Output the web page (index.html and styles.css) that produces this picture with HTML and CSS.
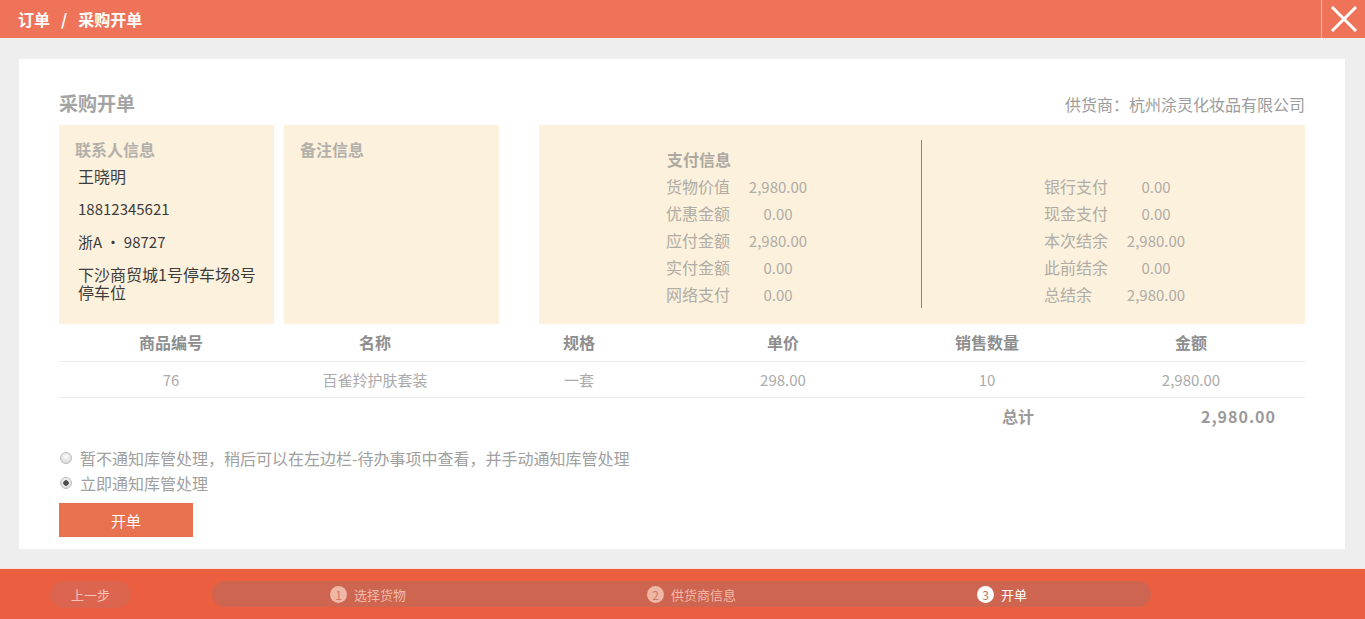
FILE: index.html
```html
<!DOCTYPE html>
<html lang="zh-CN">
<head>
<meta charset="utf-8">
<title>采购开单</title>
<link rel="stylesheet" href="styles.css">
</head>
<body>
<header class="topbar">
  <div class="crumb">订单<span class="sep">/</span>采购开单</div>
  <button class="close" aria-label="关闭">
    <svg width="28" height="28" viewBox="0 0 28 28"><path d="M2 2L26 26M26 2L2 26" stroke="#fff" stroke-width="3" fill="none"/></svg>
  </button>
</header>
<main class="page">
  <section class="panel">
    <div class="panel-head">
      <h1>采购开单</h1>
      <div class="supplier">供货商：杭州涂灵化妆品有限公司</div>
    </div>
    <div class="info">
      <div class="card contact">
        <div class="card-title">联系人信息</div>
        <div class="c-item c-name">王晓明</div>
        <div class="c-item">18812345621</div>
        <div class="c-item">浙A · 98727</div>
        <div class="c-item c-addr">下沙商贸城1号停车场8号停车位</div>
      </div>
      <div class="card note">
        <div class="card-title">备注信息</div>
      </div>
      <div class="card pay">
        <div class="pay-col">
          <div class="pay-title">支付信息</div>
          <div class="pay-row"><span class="pay-label">货物价值</span><span class="pay-val">2,980.00</span></div>
          <div class="pay-row"><span class="pay-label">优惠金额</span><span class="pay-val">0.00</span></div>
          <div class="pay-row"><span class="pay-label">应付金额</span><span class="pay-val">2,980.00</span></div>
          <div class="pay-row"><span class="pay-label">实付金额</span><span class="pay-val">0.00</span></div>
          <div class="pay-row"><span class="pay-label">网络支付</span><span class="pay-val">0.00</span></div>
        </div>
        <div class="pay-col pay-right">
          <div class="pay-row"><span class="pay-label">银行支付</span><span class="pay-val">0.00</span></div>
          <div class="pay-row"><span class="pay-label">现金支付</span><span class="pay-val">0.00</span></div>
          <div class="pay-row"><span class="pay-label">本次结余</span><span class="pay-val">2,980.00</span></div>
          <div class="pay-row"><span class="pay-label">此前结余</span><span class="pay-val">0.00</span></div>
          <div class="pay-row"><span class="pay-label">总结余</span><span class="pay-val">2,980.00</span></div>
        </div>
      </div>
    </div>
    <div class="grid grid-head">
      <div>商品编号</div><div>名称</div><div>规格</div><div>单价</div><div>销售数量</div><div>金额</div>
    </div>
    <div class="grid grid-row">
      <div>76</div><div>百雀羚护肤套装</div><div>一套</div><div>298.00</div><div>10</div><div>2,980.00</div>
    </div>
    <div class="total">
      <div class="total-label">总计</div>
      <div class="total-val">2,980.00</div>
    </div>
    <div class="opts">
      <label class="opt"><span class="radio"></span>暂不通知库管处理，稍后可以在左边栏-待办事项中查看，并手动通知库管处理</label>
      <label class="opt"><span class="radio checked"></span>立即通知库管处理</label>
    </div>
    <button class="submit">开单</button>
  </section>
</main>
<footer class="footer">
  <button class="prev">上一步</button>
  <div class="steps">
    <div class="step"><span class="num">1</span>选择货物</div>
    <div class="step"><span class="num">2</span>供货商信息</div>
    <div class="step active"><span class="num">3</span>开单</div>
  </div>
</footer>
</body>
</html>
```
FILE: styles.css
```css
html, body {
  margin: 0;
  padding: 0;
}
body {
  background: #eeeeee;
  font-family: "Noto Sans CJK SC", "Noto Sans", sans-serif;
  overflow: hidden;
}

.topbar {
  height: 38px;
  background: #ef7358;
  display: flex;
  align-items: center;
  justify-content: space-between;
  color: #fff;
}
.crumb {
  padding-left: 18px;
  font-size: 16px;
  font-weight: 700;
  line-height: 38px;
}
.sep {
  margin: 0 11px;
}
.close {
  width: 44px;
  height: 38px;
  border: 0;
  border-left: 1px solid rgba(255, 255, 255, 0.55);
  background: transparent;
  padding: 0;
  display: flex;
  align-items: center;
  justify-content: center;
}

.page {
  padding: 21px 20px 20px 19px;
}
.panel {
  background: #fff;
  height: 490px;
  box-sizing: border-box;
  padding: 32px 40px 0;
}
.panel-head {
  display: flex;
  justify-content: space-between;
  align-items: center;
  height: 24px;
}
.panel-head h1 {
  margin: 0;
  font-size: 19px;
  line-height: 24px;
  color: #a4a4a4;
  font-weight: 700;
}
.supplier {
  font-size: 16px;
  color: #9c9c9c;
  line-height: 24px;
  padding-top: 2px;
}

.info {
  display: flex;
  margin-top: 10px;
  height: 199px;
}
.card {
  background: #fcf1dc;
  box-sizing: border-box;
}
.contact, .note {
  width: 215px;
  padding: 14px 10px 0 16px;
}
.note {
  margin-left: 10px;
}
.card-title {
  font-size: 16px;
  font-weight: 700;
  line-height: 20px;
  color: #b3b0aa;
}
.c-item {
  margin: 13px 0 0 3px;
  font-size: 15px;
  line-height: 20px;
  color: #3c3c3c;
}
.c-name {
  margin-top: 7px;
  font-size: 16px;
}
.c-addr {
  font-size: 16px;
  line-height: 18px;
}

.pay {
  width: 766px;
  margin-left: 40px;
  display: flex;
  padding: 15px 0 16px;
}
.pay-col {
  width: 382px;
  box-sizing: border-box;
  padding: 6px 0 0 127px;
}
.pay-right {
  width: 384px;
  border-left: 1px solid #8e8274;
  padding: 33px 0 0 122px;
}
.pay-title {
  font-size: 16px;
  font-weight: 700;
  line-height: 27px;
  color: #ada9a2;
  margin-left: 1px;
}
.pay-row {
  display: flex;
  font-size: 16px;
  line-height: 27px;
  color: #b0aca6;
}
.pay-label {
  width: 72px;
}
.pay-val {
  width: 80px;
  text-align: center;
  font-size: 15px;
}

.grid {
  display: grid;
  grid-template-columns: repeat(6, 204px);
  padding: 0 12px 0 10px;
  border-bottom: 1px solid #ececec;
  text-align: center;
  font-size: 16px;
}
.grid-head {
  height: 37px;
  line-height: 37px;
  font-weight: 700;
  color: #8e8e8e;
}
.grid-row {
  height: 35px;
  line-height: 35px;
  color: #ababab;
  font-size: 15px;
}
.total {
  display: flex;
  justify-content: flex-end;
  padding-right: 29px;
  height: 37px;
  line-height: 37px;
  font-size: 16px;
  font-weight: 700;
  color: #9a9a9a;
}
.total-label {
  width: 100px;
  text-align: center;
}
.total-val {
  width: 208px;
  text-align: right;
  letter-spacing: 1px;
}

.opts {
  margin-top: 11px;
}
.opt {
  display: flex;
  align-items: center;
  height: 24px;
  font-size: 16px;
  color: #a0a0a0;
  margin-top: 1px;
}
.radio {
  width: 12px;
  height: 12px;
  margin: 0 8px 0 1px;
  border-radius: 50%;
  box-sizing: border-box;
  border: 1px solid #bdbdbd;
  background: radial-gradient(circle at 50% 35%, #fbfbfb, #d2d2d2);
}
.radio.checked {
  background: radial-gradient(circle, #4f4f4f 0 2.5px, transparent 3px), radial-gradient(circle at 50% 35%, #fbfbfb, #d2d2d2);
}
.submit {
  display: block;
  margin-top: 8px;
  width: 134px;
  height: 34px;
  border: 0;
  background: #e8714f;
  color: #fff;
  font-family: inherit;
  font-size: 15px;
  padding: 0;
}

.footer {
  height: 50px;
  background: #eb5e3f;
  display: flex;
  align-items: center;
  padding-left: 50px;
  box-shadow: 0 -1px 0 #f3e2d8;
}
.prev {
  width: 81px;
  height: 27px;
  border-radius: 14px;
  border: 0;
  background: #dc6550;
  color: #f6c3b4;
  font-family: inherit;
  font-size: 13px;
  padding: 0;
}
.steps {
  margin-left: 81px;
  width: 939px;
  height: 26px;
  border-radius: 13px;
  background: #cd6550;
  display: flex;
  align-items: center;
  padding-left: 118px;
  gap: 241px;
  box-sizing: border-box;
}
.step {
  display: flex;
  align-items: center;
  font-size: 13px;
  color: #f3b9a8;
}
.num {
  width: 17px;
  height: 17px;
  border-radius: 50%;
  background: #f0b6a6;
  color: #cc7a68;
  font-size: 12px;
  line-height: 17px;
  text-align: center;
  margin-right: 7px;
}
.step.active {
  color: #fff;
}
.step.active .num {
  background: #fff;
  color: #c8705c;
}
```
